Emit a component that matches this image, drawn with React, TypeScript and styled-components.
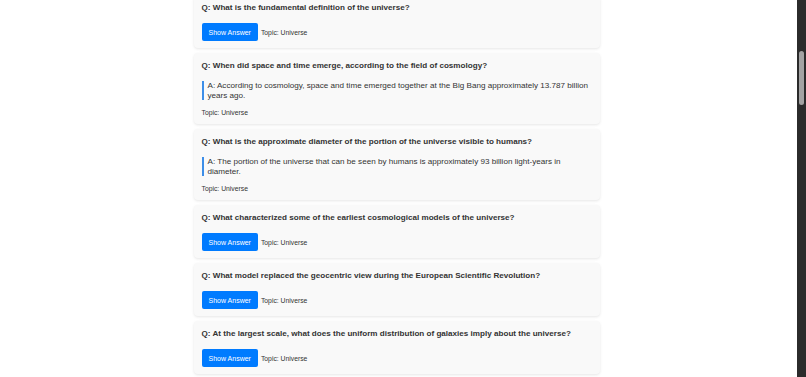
import React, { useLayoutEffect, useRef, useState } from "react";
import styled, { createGlobalStyle } from "styled-components";

const GlobalStyle = createGlobalStyle`
  html, body { margin: 0; padding: 0; background: #ffffff; overflow: hidden; }
  body { font-family: "Liberation Sans", Arial, sans-serif; color: #333333; }
`;

const Frame = styled.div`
  position: relative;
  height: 100vh;
`;

const Scroller = styled.div`
  height: 100vh;
  overflow-y: scroll;
  background: #ffffff;
  padding-right: 13px;
  box-sizing: border-box;
  scrollbar-width: none;
  &::-webkit-scrollbar { display: none; }
`;

const Track = styled.div`
  position: absolute;
  top: 0;
  right: 0;
  width: 9px;
  height: 100%;
  background: #2b2b2b;
`;

const Thumb = styled.div`
  position: absolute;
  left: 2px;
  width: 5px;
  border-radius: 3px;
  background: #a3a3a3;
`;

const Page = styled.main`
  width: 406px;
  margin: 0 auto;
  padding: 12px 0 20px;
`;

const List = styled.div`
  display: flex;
  flex-direction: column;
  gap: 5px;
`;

const Card = styled.section`
  background: #f9f9f9;
  border-radius: 4px;
  box-shadow: 0 1px 3px rgba(0, 0, 0, 0.1);
  padding: 7px 8px 7px;
`;

const Question = styled.h3`
  font-size: 8.1px;
  line-height: 11px;
  font-weight: bold;
  margin: 0 0 10px;
  color: #333333;
`;

const Answer = styled.p`
  margin: 0 0 8px;
  border-left: 2px solid #3d8ee8;
  padding-left: 4px;
  font-size: 8.1px;
  line-height: 9.5px;
  color: #333333;
`;

const Footer = styled.div`
  display: flex;
  align-items: center;
  gap: 3px;
`;

const ShowButton = styled.button`
  background: #007bff;
  color: #ffffff;
  border: none;
  border-radius: 2px;
  height: 18px;
  padding: 0 7px;
  font-family: "Liberation Sans", Arial, sans-serif;
  font-size: 7px;
  cursor: pointer;
`;

const Topic = styled.div`
  font-size: 6.8px;
  line-height: 9px;
  color: #333333;
`;

type Item = { q: string; a: string; open?: boolean };

const items: Item[] = [
  { q: "What is the universe made of?", a: "Ordinary matter, dark matter and dark energy." },
  { q: "How old is the universe?", a: "About 13.8 billion years." },
  { q: "What is the observable universe?", a: "The region from which light has had time to reach us." },
  { q: "What is cosmology?", a: "The study of the origin and evolution of the universe." },
  { q: "What is the Big Bang theory?", a: "The model describing the early expansion of the universe." },
  { q: "Is the universe expanding?", a: "Yes, and the expansion is accelerating." },
  { q: "What is the fundamental definition of the universe?", a: "The universe is all of space and time and their contents." },
  {
    q: "When did space and time emerge, according to the field of cosmology?",
    a: "According to cosmology, space and time emerged together at the Big Bang approximately 13.787 billion years ago.",
    open: true,
  },
  {
    q: "What is the approximate diameter of the portion of the universe visible to humans?",
    a: "The portion of the universe that can be seen by humans is approximately 93 billion light-years in diameter.",
    open: true,
  },
  { q: "What characterized some of the earliest cosmological models of the universe?", a: "They were geocentric, placing Earth at the centre." },
  { q: "What model replaced the geocentric view during the European Scientific Revolution?", a: "The heliocentric model." },
  { q: "At the largest scale, what does the uniform distribution of galaxies imply about the universe?", a: "That the universe is homogeneous and isotropic." },
  { q: "What is dark matter?", a: "Matter that does not emit light but has gravitational effects." },
  { q: "What is dark energy?", a: "A form of energy driving the accelerated expansion." },
  { q: "What is the cosmic microwave background?", a: "Leftover radiation from the early universe." },
  { q: "What are galaxies?", a: "Vast systems of stars, gas and dust bound by gravity." },
  { q: "What is a galaxy cluster?", a: "A group of galaxies bound together by gravity." },
  { q: "What are the largest known structures?", a: "Galaxy filaments and superclusters." },
  { q: "What is the shape of the universe?", a: "Observations suggest it is very nearly flat." },
  { q: "What is inflation?", a: "A brief period of extremely rapid early expansion." },
  { q: "What is redshift?", a: "The stretching of light from receding objects." },
  { q: "What is Hubble's law?", a: "Galaxies recede at speeds proportional to their distance." },
  { q: "What is a light-year?", a: "The distance light travels in one year." },
  { q: "What is the multiverse?", a: "A hypothetical set of multiple universes." },
  { q: "What elements formed first?", a: "Hydrogen, helium and traces of lithium." },
  { q: "When did the first stars form?", a: "A few hundred million years after the Big Bang." },
  { q: "What is baryonic matter?", a: "Ordinary matter made of protons and neutrons." },
  { q: "What is the fate of the universe?", a: "It depends on the nature of dark energy." },
  { q: "What is the heat death?", a: "A state of maximum entropy with no usable energy." },
  { q: "What is the Big Crunch?", a: "A hypothetical collapse of the universe." },
  { q: "What is the Big Rip?", a: "A scenario where expansion tears everything apart." },
  { q: "What is spacetime?", a: "The four-dimensional fabric combining space and time." },
  { q: "Who proposed general relativity?", a: "Albert Einstein." },
  { q: "What is a black hole?", a: "A region where gravity prevents anything from escaping." },
  { q: "What is a quasar?", a: "A very luminous active galactic nucleus." },
  { q: "What is the Milky Way?", a: "The galaxy containing our Solar System." },
  { q: "How many galaxies are there?", a: "Likely hundreds of billions in the observable universe." },
  { q: "What is the Local Group?", a: "The galaxy group that includes the Milky Way." },
  { q: "What is cosmic recombination?", a: "When electrons and nuclei first formed neutral atoms." },
  { q: "What is the Planck epoch?", a: "The earliest period of time after the Big Bang." },
  { q: "What is nucleosynthesis?", a: "The creation of atomic nuclei in the early universe." },
  { q: "What is a supercluster?", a: "A large group of galaxy clusters." },
  { q: "What is a cosmic void?", a: "A vast, nearly empty region between filaments." },
  { q: "What is gravitational lensing?", a: "The bending of light by massive objects." },
  { q: "What is the cosmological constant?", a: "A term in Einstein's equations associated with dark energy." },
];

const FIRST_VISIBLE = 6;

function QuestionCard({ item, cardRef }: { item: Item; cardRef?: React.Ref<HTMLElement> }) {
  const [open, setOpen] = useState(!!item.open);
  return (
    <Card ref={cardRef}>
      <Question>Q: {item.q}</Question>
      {open ? (
        <>
          <Answer>A: {item.a}</Answer>
          <Topic>Topic: Universe</Topic>
        </>
      ) : (
        <Footer>
          <ShowButton onClick={() => setOpen(true)}>Show Answer</ShowButton>
          <Topic>Topic: Universe</Topic>
        </Footer>
      )}
    </Card>
  );
}

export default function App() {
  const scrollerRef = useRef<HTMLDivElement>(null);
  const anchorRef = useRef<HTMLElement>(null);
  const [thumb, setThumb] = useState({ top: 52, height: 53 });

  const updateThumb = () => {
    const s = scrollerRef.current;
    if (!s) return;
    const h = s.clientHeight;
    const height = Math.max(20, (h / s.scrollHeight) * h);
    const top = (s.scrollTop / (s.scrollHeight - h)) * (h - height);
    setThumb({ top, height });
  };

  useLayoutEffect(() => {
    const s = scrollerRef.current;
    const a = anchorRef.current;
    if (s && a) {
      s.scrollTop = a.offsetTop - s.offsetTop + 5;
    }
    updateThumb();
  }, []);

  return (
    <>
      <GlobalStyle />
      <Frame>
        <Scroller ref={scrollerRef} onScroll={updateThumb}>
          <Page>
            <List>
              {items.map((it, i) => (
                <QuestionCard key={i} item={it} cardRef={i === FIRST_VISIBLE ? anchorRef : undefined} />
              ))}
            </List>
          </Page>
        </Scroller>
        <Track>
          <Thumb style={{ top: thumb.top, height: thumb.height }} />
        </Track>
      </Frame>
    </>
  );
}
